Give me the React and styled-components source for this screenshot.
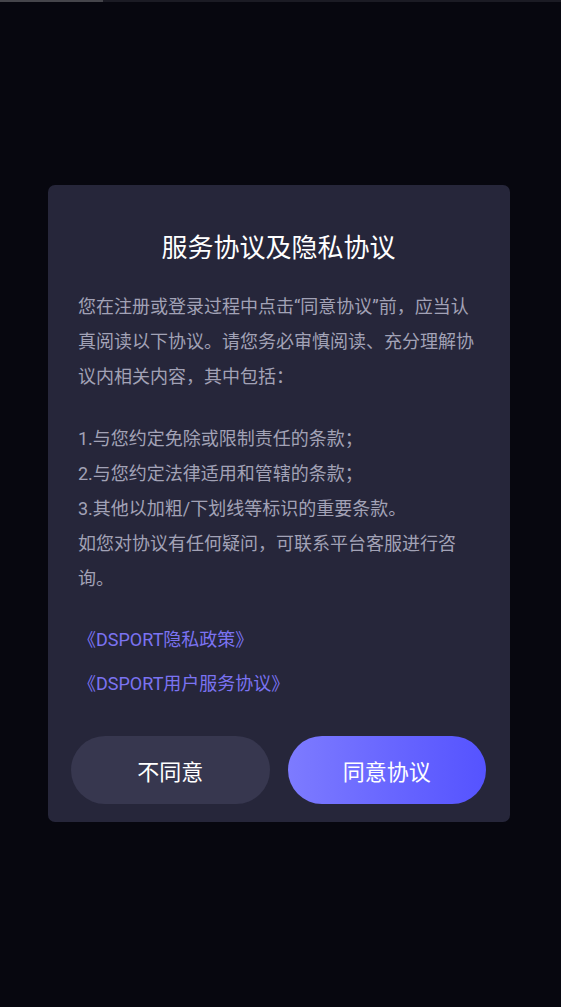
import { createGlobalStyle, styled } from "styled-components"

const Global = createGlobalStyle`
  html, body {
    margin: 0;
    padding: 0;
    background: #07070f;
  }
  body {
    font-family: Roboto, "Noto Sans CJK SC", sans-serif;
  }
`

const Page = styled.div`
  display: flex;
  flex-direction: column;
  height: 100vh;
  background: #07070f;
`

const TopBar = styled.div`
  display: flex;
  height: 2px;
  background: #1b1b24;

  .done {
    width: 103px;
    background: #45454b;
  }
`

const Center = styled.div`
  flex: 1;
  display: flex;
  align-items: center;
  padding-left: 48px;
  margin-top: -2px;
`

const Dialog = styled.div`
  width: 462px;
  box-sizing: border-box;
  padding: 45px 24px 18px 23px;
  background: #26263a;
  border-radius: 7px;
  display: flex;
  flex-direction: column;
`

const Title = styled.h2`
  margin: 0 0 23px;
  font-size: 26px;
  line-height: 36px;
  font-weight: 400;
  color: #ffffff;
  text-align: center;
`

const Body = styled.div`
  padding: 0 6px 0 7px;
  color: #a2a2b6;
  font-size: 18px;
  line-height: 35px;

  p {
    margin: 0;
  }
  p + p {
    margin-top: 27px;
  }
`

const Links = styled.div`
  margin-top: 22px;
  padding-left: 7px;
  display: flex;
  flex-direction: column;
`

const LinkText = styled.a`
  color: #7b73f2;
  font-size: 18px;
  line-height: 44px;
  text-decoration: none;
`

const Buttons = styled.div`
  margin-top: 30px;
  display: flex;
  gap: 18px;
`

const Button = styled.button`
  flex: 1;
  height: 68px;
  border: none;
  border-radius: 34px;
  font-family: inherit;
  font-size: 22px;
  color: #ffffff;
  background: ${(p) =>
    p.$primary ? "linear-gradient(90deg, #7d7bff 0%, #5553ff 100%)" : "#37374f"};
`

export default function App() {
  return (
    <Page>
      <Global />
      <TopBar>
        <div className="done" />
      </TopBar>
      <Center>
        <Dialog>
          <Title>服务协议及隐私协议</Title>
          <Body>
            <p>
              您在注册或登录过程中点击“同意协议”前，应当认真阅读以下协议。请您务必审慎阅读、充分理解协议内相关内容，其中包括：
            </p>
            <p>
              1.与您约定免除或限制责任的条款；
              <br />
              2.与您约定法律适用和管辖的条款；
              <br />
              3.其他以加粗/下划线等标识的重要条款。
              <br />
              如您对协议有任何疑问，可联系平台客服进行咨询。
            </p>
          </Body>
          <Links>
            <LinkText>《DSPORT隐私政策》</LinkText>
            <LinkText>《DSPORT用户服务协议》</LinkText>
          </Links>
          <Buttons>
            <Button>不同意</Button>
            <Button $primary>同意协议</Button>
          </Buttons>
        </Dialog>
      </Center>
    </Page>
  )
}
